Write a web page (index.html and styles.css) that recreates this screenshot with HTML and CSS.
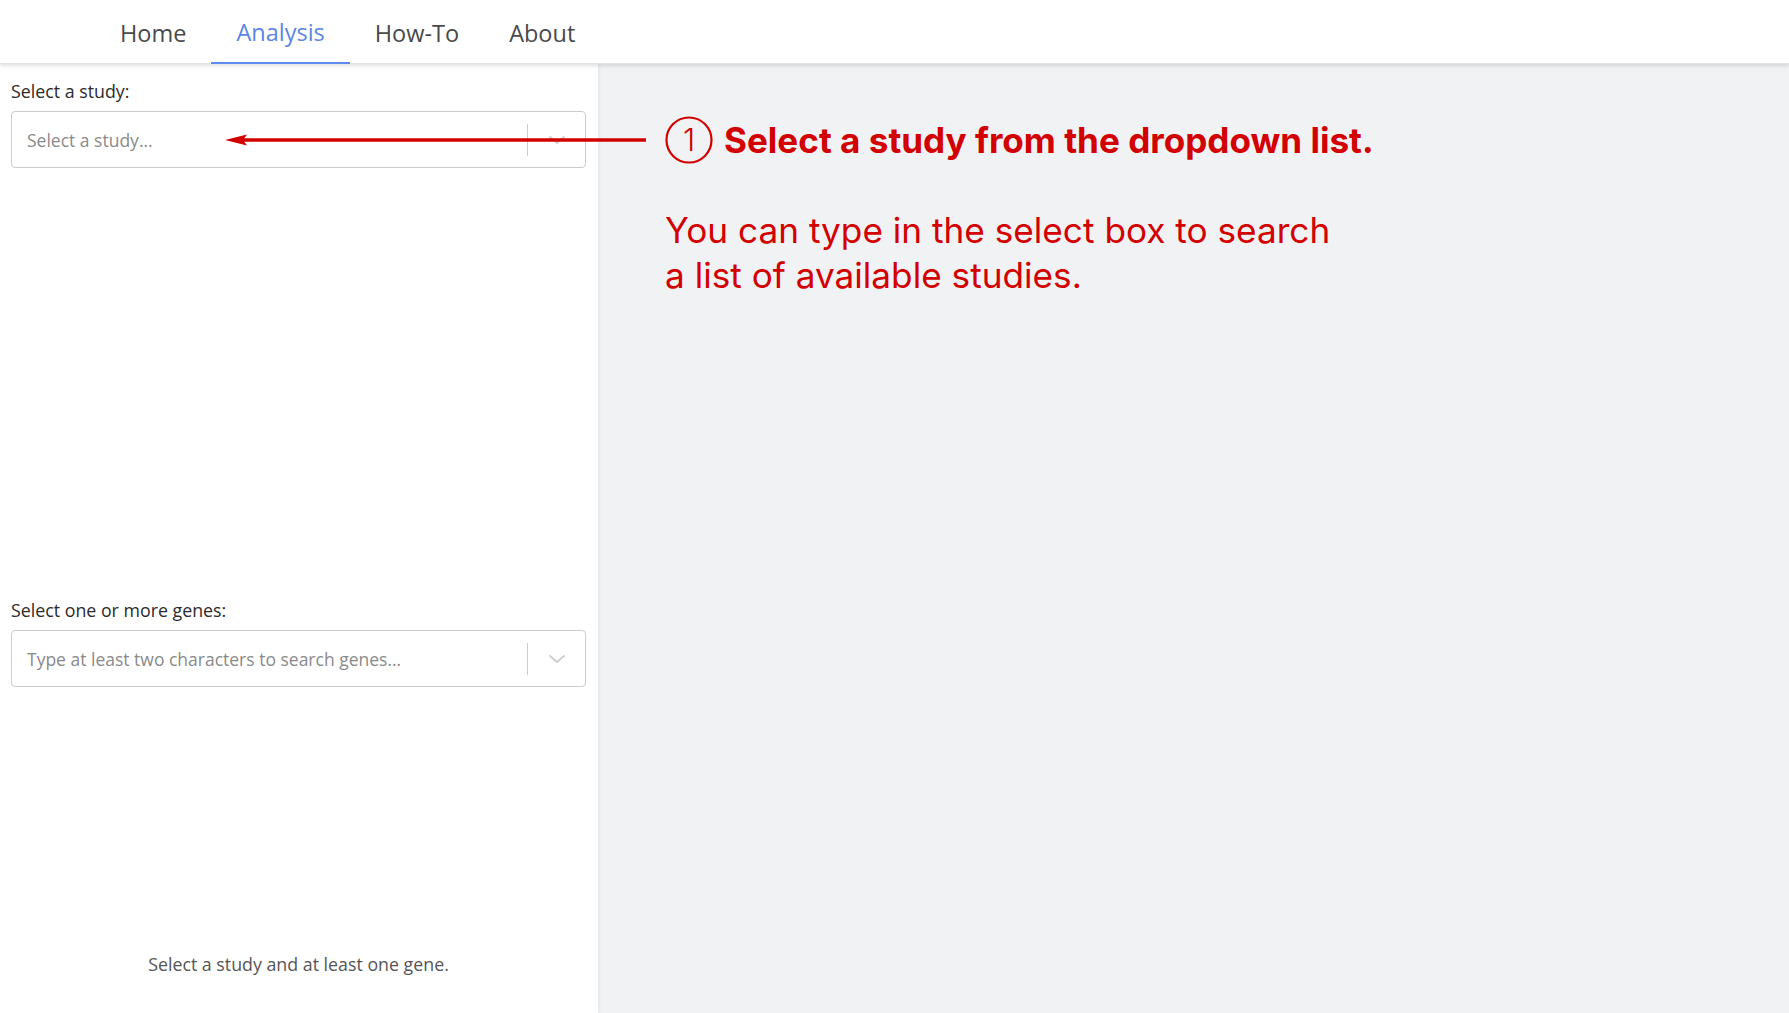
FILE: index.html
```html
<!DOCTYPE html>
<html lang="en">
<head>
<meta charset="utf-8">
<title>Analysis</title>
<link rel="stylesheet" href="styles.css">
</head>
<body>
<header class="topbar">
  <nav class="tabs">
    <a class="tab">Home</a>
    <a class="tab active">Analysis</a>
    <a class="tab">How-To</a>
    <a class="tab">About</a>
  </nav>
</header>
<div class="layout">
  <aside class="sidebar">
    <section class="field study-field">
      <label class="field-label">Select a study:</label>
      <div class="select">
        <span class="placeholder">Select a study...</span>
        <span class="indicators">
          <span class="sep"></span>
          <svg class="chev" width="20" height="20" viewBox="0 0 20 20"><path d="M2.5 6.5 L10 13 L17.5 6.5" fill="none" stroke="#cccccc" stroke-width="1.8"/></svg>
        </span>
      </div>
    </section>
    <section class="field genes-field">
      <label class="field-label">Select one or more genes:</label>
      <div class="select">
        <span class="placeholder">Type at least two characters to search genes...</span>
        <span class="indicators">
          <span class="sep"></span>
          <svg class="chev" width="20" height="20" viewBox="0 0 20 20"><path d="M2.5 6.5 L10 13 L17.5 6.5" fill="none" stroke="#cccccc" stroke-width="1.8"/></svg>
        </span>
      </div>
    </section>
    <p class="status">Select a study and at least one gene.</p>
  </aside>
  <main class="main"></main>
</div>

<div class="callout">
  <svg class="arrow" width="421" height="16" viewBox="0 0 421 16"><path d="M14 8 H421" stroke="#d20000" stroke-width="3.4"/><path d="M0 8 L22 2.5 L18 8 L22 13.5 Z" fill="#d20000"/></svg>
  <svg class="step" width="48" height="48" viewBox="0 0 48 48"><circle cx="24" cy="24" r="22.5" fill="none" stroke="#d20000" stroke-width="2.2"/><text x="24" y="35" text-anchor="middle" font-family="Inter, sans-serif" font-weight="300" font-size="31" fill="#d20000">1</text></svg>
  <span class="callout-title">Select a study from the dropdown list.</span>
</div>
<p class="callout-text">You can type in the select box to search<br>a list of available studies.</p>
</body>
</html>
```
FILE: styles.css
```css
* { box-sizing: border-box; }
html, body { margin: 0; padding: 0; height: 100%; }
body {
  font-family: "Open Sans", "Noto Sans", sans-serif;
  color: #333;
  background: #f1f2f4;
  overflow: hidden;
  position: relative;
}
.topbar {
  height: 64px;
  background: #fff;
  box-shadow: 0 2px 4px rgba(0,0,0,0.12);
  position: relative;
  z-index: 2;
  border-bottom: 1px solid #e3e4e6;
}
.tabs {
  display: flex;
  height: 100%;
  padding-left: 95px;
}
.tab {
  display: flex;
  align-items: center;
  padding: 5px 25px 0;
  font-size: 23.5px;
  color: #4a4a4a;
  border-bottom: 2px solid transparent;
  cursor: pointer;
}
.tab.active {
  color: #5b86e5;
  border-bottom-color: #5b8def;
  padding-top: 3px;
  padding-bottom: 1px;
  margin-bottom: -1px;
}
.layout {
  display: flex;
  height: calc(100vh - 64px);
}
.sidebar {
  width: 598px;
  flex: 0 0 598px;
  background: #fff;
  display: flex;
  flex-direction: column;
  padding: 16px 12px 0 11px;
  box-shadow: 1px 0 4px rgba(0,0,0,0.06);
  position: relative;
  z-index: 1;
}
.field { display: flex; flex-direction: column; }
.study-field { height: 519px; }
.field-label {
  font-size: 17.8px;
  color: #2b2b2b;
  line-height: 22px;
  margin-bottom: 9px;
}
.select {
  height: 57px;
  border: 1px solid #cccccc;
  border-radius: 4px;
  display: flex;
  align-items: center;
  padding-left: 15px;
  background: #fff;
}
.placeholder {
  flex: 1;
  font-size: 17.5px;
  color: #8a8a8a;
}
.indicators {
  display: flex;
  align-items: center;
  height: 100%;
}
.sep {
  width: 1px;
  height: 32px;
  background: #cccccc;
}
.chev { margin: 0 18px 0 19px; display: block; }
.status {
  margin: auto 0 0;
  padding-bottom: 37px;
  text-align: center;
  font-size: 17.8px;
  color: #555;
}
.main { flex: 1; background: #f1f2f4; }

.callout {
  position: absolute;
  left: 225px;
  top: 116px;
  display: flex;
  align-items: center;
  z-index: 3;
  color: #d20000;
}
.arrow { display: block; }
.step { display: block; margin-left: 19px; margin-right: 11px; }
.callout-title {
  font-family: Inter, "Noto Sans", sans-serif;
  font-weight: 700;
  font-size: 35.1px;
  white-space: nowrap;
}
.callout-text {
  position: absolute;
  left: 665px;
  top: 208px;
  margin: 0;
  font-family: Inter, "Noto Sans", sans-serif;
  font-size: 35.2px;
  line-height: 45px;
  color: #d20000;
  z-index: 3;
}
```
